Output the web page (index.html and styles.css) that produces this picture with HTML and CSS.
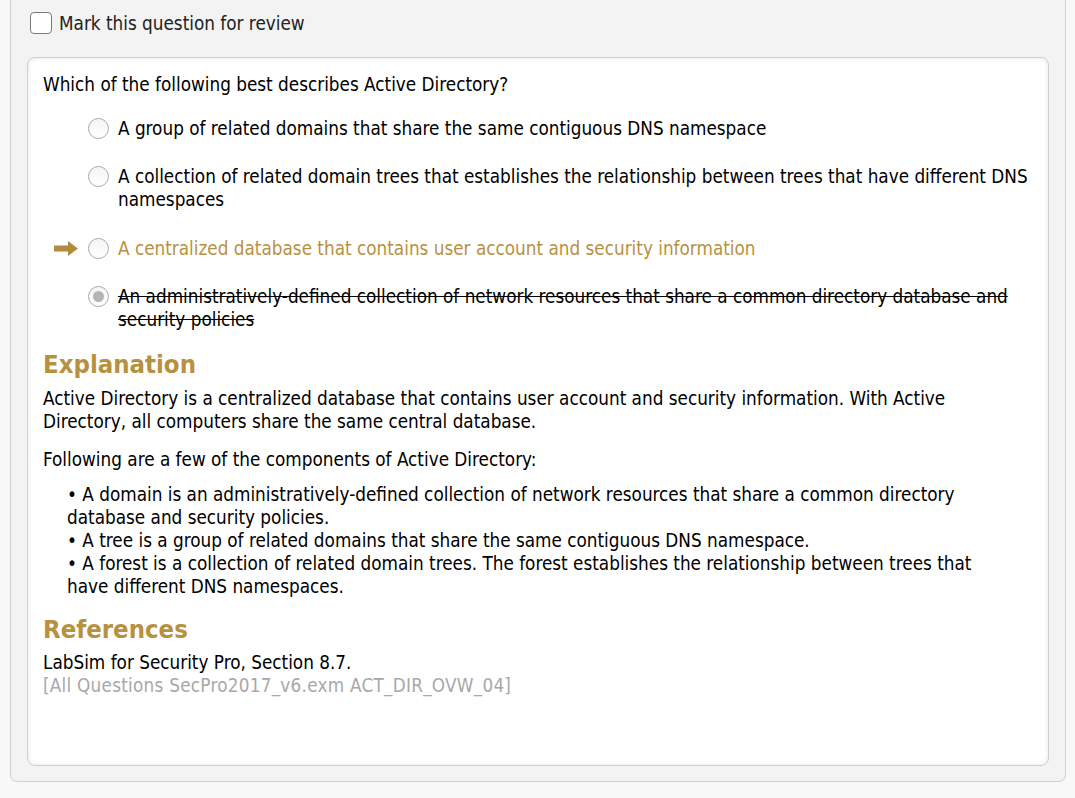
FILE: index.html
```html
<!DOCTYPE html>
<html>
<head>
<meta charset="utf-8">
<link rel="stylesheet" href="styles.css">
</head>
<body>
<div class="outer">
  <label class="review">
    <span class="checkbox"></span>
    <span>Mark this question for review</span>
  </label>
  <div class="card">
    <p class="question">Which of the following best describes Active Directory?</p>
    <div class="options">
      <div class="option">
        <span class="marker"></span>
        <span class="radio"></span>
        <span class="otext">A group of related domains that share the same contiguous DNS namespace</span>
      </div>
      <div class="option">
        <span class="marker"></span>
        <span class="radio"></span>
        <span class="otext">A collection of related domain trees that establishes the relationship between trees that have different DNS namespaces</span>
      </div>
      <div class="option correct">
        <span class="marker">
          <svg width="24" height="15" viewBox="0 0 24 15"><path d="M0 4.5 H14 V0 L24 7.5 L14 15 V10.5 H0 Z" fill="#b38b3d"/></svg>
        </span>
        <span class="radio"></span>
        <span class="otext">A centralized database that contains user account and security information</span>
      </div>
      <div class="option wrong">
        <span class="marker"></span>
        <span class="radio checked"></span>
        <span class="otext">An administratively-defined collection of network resources that share a common directory database and security policies</span>
      </div>
    </div>
    <h2 class="heading">Explanation</h2>
    <div class="expl">
      <p class="para">Active Directory is a centralized database that contains user account and security information. With Active Directory, all computers share the same central database.</p>
      <p class="para follow">Following are a few of the components of Active Directory:</p>
      <ul class="bullets">
        <li>• A domain is an administratively-defined collection of network resources that share a common directory database and security policies.</li>
        <li>• A tree is a group of related domains that share the same contiguous DNS namespace.</li>
        <li>• A forest is a collection of related domain trees. The forest establishes the relationship between trees that have different DNS namespaces.</li>
      </ul>
    </div>
    <h2 class="heading refs">References</h2>
    <p class="ref">LabSim for Security Pro, Section 8.7.</p>
    <p class="ref gray">[All Questions SecPro2017_v6.exm ACT_DIR_OVW_04]</p>
  </div>
</div>
</body>
</html>
```
FILE: styles.css
```css
html, body {
  margin: 0;
  padding: 0;
  background: #f8f8f8;
  font-family: "DejaVu Sans Condensed", "DejaVu Sans", sans-serif;
  font-size: 18.75px;
  color: #000;
}

.outer {
  margin: 0 9px 0 10px;
  height: 782px;
  box-sizing: border-box;
  border: 1px solid #d2d2d2;
  border-top: none;
  border-radius: 0 0 7px 7px;
  background: #f3f3f3;
  padding: 12px 16px 0 16px;
  display: flex;
  flex-direction: column;
}

.review {
  display: flex;
  align-items: center;
  gap: 7px;
  height: 22px;
  padding-left: 3px;
  color: #222;
  line-height: 22px;
}

.review span:last-child {
  position: relative;
  top: 1px;
}

.checkbox {
  width: 20px;
  height: 20px;
  border: 1px solid #7a7a7a;
  border-radius: 4px;
  background: #fff;
  flex: none;
}

.card {
  margin-top: 23px;
  height: 709px;
  box-sizing: border-box;
  background: #fff;
  border: 1px solid #cfcfcf;
  border-radius: 8px;
  box-shadow: inset 0 0 5px rgba(0,0,0,0.10);
  padding: 15px 10px 0 15px;
  line-height: 23px;
}

p { margin: 0; }

.question { margin: 0; }

.options {
  margin-top: 21px;
  display: flex;
  flex-direction: column;
  gap: 25px;
}

.option {
  display: flex;
  align-items: flex-start;
}

.option.correct { margin-top: 1px; }

.marker {
  width: 45px;
  flex: none;
  height: 23px;
  display: flex;
  align-items: center;
  justify-content: flex-start;
  padding-left: 11px;
  box-sizing: border-box;
}

.radio {
  width: 19px;
  height: 19px;
  border: 1px solid #a8a8a8;
  border-radius: 50%;
  background: linear-gradient(#f4f4f4, #ffffff);
  flex: none;
  margin-top: 1px;
  margin-right: 9px;
  position: relative;
}

.radio.checked::after {
  content: "";
  position: absolute;
  left: 4px;
  top: 4px;
  width: 11px;
  height: 11px;
  border-radius: 50%;
  background: #b4b4b4;
}

.otext { flex: 1; }

.correct .otext { color: #b8913f; }

.wrong .otext { text-decoration: line-through; }

.heading {
  margin: 18px 0 0 0;
  font-size: 25.5px;
  line-height: 30px;
  font-weight: bold;
  color: #b8913f;
}

.expl {
  margin-top: 8px;
  padding-right: 43px;
}

.follow { margin-top: 15px; }

.bullets {
  list-style: none;
  margin: 12px 0 0 0;
  padding: 0 0 0 24px;
}

.refs { margin-top: 16px; }

.ref { margin-top: 0; }
.heading.refs + .ref { margin-top: 7px; }

.gray { color: #a8a8a8; line-height: 24px; letter-spacing: 0.25px; }
```
